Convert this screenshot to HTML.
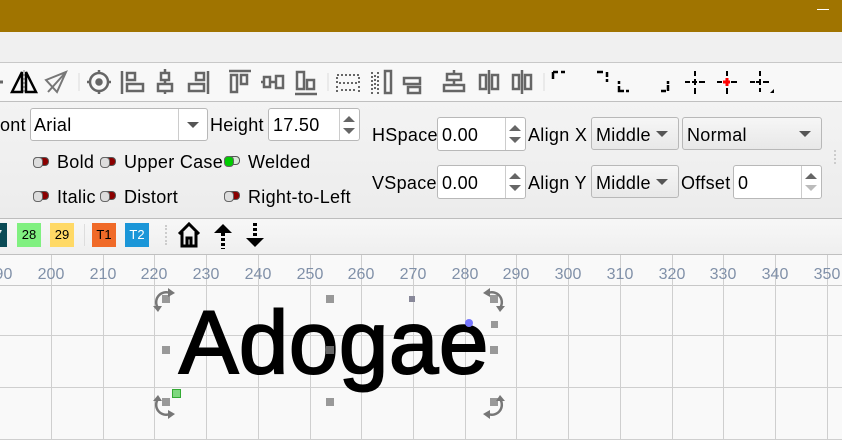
<!DOCTYPE html>
<html><head><meta charset="utf-8"><style>
*{margin:0;padding:0;box-sizing:border-box}
body{width:842px;height:440px;overflow:hidden;position:relative;background:#f0f0f0;font-family:"Liberation Sans",sans-serif;color:#000}
.a{position:absolute}
.t{position:absolute;font-size:18px;white-space:nowrap;line-height:20px;letter-spacing:0.3px}
.box{position:absolute;background:#fff;border:1px solid #b8b8b8;border-radius:3px}
.cb{position:absolute;background:linear-gradient(#f6f6f6,#e8e8e8);border:1px solid #b8b8b8;border-radius:3px}
.arr{position:absolute;width:0;height:0;border-left:6px solid transparent;border-right:6px solid transparent;border-top:6px solid #555}
.tg{position:absolute;width:16px;height:9px;border-radius:4px;background:#8b0000;border:1px solid #555}
.tg:before{content:"";position:absolute;left:-1px;top:-1px;width:8px;height:9px;border-radius:4px;background:#ddd;border:1px solid #666}
.tg.g{background:#d8e8d8}
.tg.g:before{background:#0c0;left:-1px}
.hd{position:absolute;width:8px;height:8px;background:#999}
.rl{position:absolute;font-size:16px;color:#8090a8;top:266px;width:40px;text-align:center}
.vl{position:absolute;top:255px;width:1px;height:185px;background:#cfcfcf}
.hl{position:absolute;left:0;width:842px;height:1px;background:#cfcfcf}
.sw{position:absolute;top:223px;width:24px;height:24px;font-size:13px;text-align:center;line-height:24px}
</style></head><body>
<div class="a" style="left:0;top:0;width:842px;height:32px;background:#a07400"></div>
<div class="a" style="left:817px;top:9px;width:12px;height:1px;background:#fff"></div>
<div class="a" style="left:0;top:32px;width:842px;height:30px;background:#f0f0f0"></div>
<div class="a" style="left:0;top:62px;width:842px;height:1px;background:#c8c8c8"></div>
<div class="a" style="left:0;top:63px;width:842px;height:38px;background:#f8f8f8"></div>
<div class="a" style="left:0;top:101px;width:842px;height:1px;background:#c0c0c0"></div>

<svg class="a" style="left:0;top:63px" width="842" height="38" fill="none" stroke-linecap="butt">
<g stroke="#666" stroke-width="3">
<path d="M0 19h3"/>
</g>
<path d="M12 29l10-20v20z M36 29l-10-20v20z" stroke="#000" stroke-width="2.5"/>
<path d="M24 7v24" stroke="#888" stroke-dasharray="2 2"/>
<path d="M46 17l20-8-9 20zM48 29l18-20" stroke="#777" stroke-width="2"/>
<path d="M79 10v18" stroke="#ddd"/>
<g stroke="#666" stroke-width="2.5">
<circle cx="99" cy="19" r="9"/><circle cx="99" cy="19" r="2.5" fill="#666"/><path d="M99 7v4M99 27v4M87 19h4M107 19h4"/>
<path d="M122 8v23M127 10h8v7h-8zM127 21h16v7h-16z"/>
<path d="M161 10h8v7h-8zM158 21h14v7h-14zM165 17v4M165 6v4M165 28v3"/>
<path d="M208 8v23M196 10h8v7h-8zM189 21h15v7h-15z"/>
<path d="M229 8h22M231 12h6v17h-6zM241 12h6v9h-6z"/>
<path d="M264 14h6v10h-6zM276 13h7v12h-7zM261 19h3M270 19h6"/>
<path d="M295 31h22M297 9h7v17h-7zM307 17h7v9h-7z"/>
</g>
<path d="M328 10v18" stroke="#ddd"/>
<g stroke="#666" stroke-width="2" stroke-dasharray="2 2">
<path d="M337 12h22v8h-22z"/><path d="M337 23v8M359 23v8M341 27h14"/>
<path d="M372 9v22M378 9v22M375 12v16"/>
</g>
<path d="M385 8h6v22h-6z" stroke="#666" stroke-width="2.5"/>
<g stroke="#666" stroke-width="2.5">
<path d="M404 15v6h16v-6zM408 24h12v6h-12z"/>
<path d="M447 11h14v6h-14zM444 22h20v6h-20zM454 7v4M454 17v5"/>
<path d="M480 12h6v14h-6zM492 12h6v14h-6zM489 7v24"/>
<path d="M513 12h6v14h-6zM525 12h6v14h-6zM522 7v24"/>
</g>
<path d="M544 10v18" stroke="#ddd"/>
<g stroke="#000" stroke-width="2.5">
<path d="M553 9v7M553 9h5M561 9h4"/>
<path d="M597 9h6M607 9v5M607 16v3"/>
<path d="M619 18v3M619 23v5h5M626 28h3"/>
<path d="M661 28h5M668 28v-6M668 18v3"/>
</g>
<g stroke="#000" stroke-width="2">
<path d="M685 19h5M692 19h5M699 19h6M695 8v5M695 16v6M695 25v6"/>
<path d="M717 19h5M731 19h6M727 8v5M727 25v6"/>
<path d="M750 19h5M756 19h5M763 19h6M760 8v5M760 16v6M760 25v4"/>
</g>
<path d="M723 19h7M727 15v8" stroke="#f00" stroke-width="3"/>
<path d="M770 30l4-4v4z" fill="#000"/>
</svg>

<!-- font panel -->
<div class="a" style="left:0;top:102px;width:842px;height:116px;background:linear-gradient(#f3f3f3,#ececec)"></div>
<div class="a" style="left:0;top:218px;width:842px;height:1px;background:#bdbdbd"></div>
<div class="t" style="left:0;top:115px">ont</div>
<div class="box" style="left:30px;top:108px;width:178px;height:33px"></div>
<div class="a" style="left:178px;top:109px;width:1px;height:31px;background:#ccc"></div>
<div class="arr" style="left:187px;top:122px"></div>
<div class="t" style="left:34px;top:115px">Arial</div>
<div class="t" style="left:210px;top:115px">Height</div>
<div class="box" style="left:268px;top:108px;width:92px;height:33px"></div>
<div class="a" style="left:339px;top:109px;width:1px;height:31px;background:#ccc"></div>
<div class="t" style="left:273px;top:115px">17.50</div>
<svg class="a" style="left:341px;top:112px" width="16" height="26"><path d="M2 10l6-6 6 6zM2 16l6 6 6-6z" fill="#666"/></svg>

<div class="tg" style="left:33px;top:157px"></div><div class="t" style="left:57px;top:152px">Bold</div>
<div class="tg" style="left:100px;top:157px"></div><div class="t" style="left:124px;top:152px">Upper Case</div>
<div class="tg g" style="left:224px;top:156px"></div><div class="t" style="left:248px;top:152px">Welded</div>
<div class="tg" style="left:33px;top:191px"></div><div class="t" style="left:57px;top:187px">Italic</div>
<div class="tg" style="left:100px;top:191px"></div><div class="t" style="left:124px;top:187px">Distort</div>
<div class="tg" style="left:224px;top:191px"></div><div class="t" style="left:248px;top:187px">Right-to-Left</div>

<div class="t" style="left:372px;top:125px">HSpace</div>
<div class="box" style="left:437px;top:117px;width:89px;height:34px"></div>
<div class="a" style="left:505px;top:118px;width:1px;height:32px;background:#ccc"></div>
<div class="t" style="left:442px;top:125px">0.00</div>
<svg class="a" style="left:507px;top:121px" width="16" height="26"><path d="M2 10l6-6 6 6zM2 16l6 6 6-6z" fill="#666"/></svg>
<div class="t" style="left:528px;top:125px">Align X</div>
<div class="cb" style="left:591px;top:117px;width:88px;height:33px"></div>
<div class="t" style="left:596px;top:125px;width:55px;overflow:hidden">Middle</div>
<div class="arr" style="left:656px;top:131px"></div>
<div class="cb" style="left:682px;top:117px;width:140px;height:33px"></div>
<div class="t" style="left:687px;top:125px">Normal</div>
<div class="arr" style="left:799px;top:131px"></div>

<div class="t" style="left:372px;top:173px">VSpace</div>
<div class="box" style="left:437px;top:165px;width:89px;height:34px"></div>
<div class="a" style="left:505px;top:166px;width:1px;height:32px;background:#ccc"></div>
<div class="t" style="left:442px;top:173px">0.00</div>
<svg class="a" style="left:507px;top:169px" width="16" height="26"><path d="M2 10l6-6 6 6zM2 16l6 6 6-6z" fill="#666"/></svg>
<div class="t" style="left:528px;top:173px">Align Y</div>
<div class="cb" style="left:591px;top:165px;width:88px;height:33px"></div>
<div class="t" style="left:596px;top:173px;width:55px;overflow:hidden">Middle</div>
<div class="arr" style="left:656px;top:179px"></div>
<div class="t" style="left:681px;top:173px">Offset</div>
<div class="box" style="left:733px;top:165px;width:89px;height:34px"></div>
<div class="a" style="left:801px;top:166px;width:1px;height:32px;background:#ccc"></div>
<div class="t" style="left:738px;top:173px">0</div>
<svg class="a" style="left:803px;top:169px" width="16" height="26"><path d="M2 10l6-6 6 6z" fill="#666"/><path d="M2 16l6 6 6-6z" fill="#bbb"/></svg>
<div class="a" style="left:834px;top:150px;width:2px;height:14px;border-left:2px dotted #ccc"></div>

<!-- toolbar 2 -->
<div class="a" style="left:0;top:219px;width:842px;height:35px;background:linear-gradient(#f7f7f7,#efefef)"></div>
<div class="a" style="left:0;top:254px;width:842px;height:1px;background:#c0c0c0"></div>
<div class="sw" style="left:-17px;background:#0a4a55;color:#fff">27</div>
<div class="sw" style="left:17px;background:#80f080">28</div>
<div class="sw" style="left:50px;background:#ffd966">29</div>
<div class="a" style="left:84px;top:224px;width:1px;height:22px;background:#ddd"></div>
<div class="sw" style="left:92px;background:#f06a28">T1</div>
<div class="sw" style="left:125px;background:#1b96d8;color:#fff">T2</div>
<div class="a" style="left:165px;top:225px;width:2px;height:20px;border-left:2px dotted #ccc"></div>
<svg class="a" style="left:176px;top:221px" width="100" height="30">
<path d="M3 13L13 3l10 10M6 11v14h14V11M11 25v-8h4v8" stroke="#000" stroke-width="3" fill="none"/>
<path d="M38 12l9-9 9 9z" fill="#000"/><path d="M47 12v16" stroke="#000" stroke-width="4" stroke-dasharray="3 2"/>
<path d="M70 17l9 9 9-9z" fill="#000"/><path d="M79 2v16" stroke="#000" stroke-width="4" stroke-dasharray="3 2"/>
</svg>

<!-- ruler & canvas -->
<div class="a" style="left:0;top:255px;width:842px;height:185px;background:#f9f9f9"></div>
<div class="a" style="left:0;top:285px;width:842px;height:1px;background:#c8c8c8"></div>
<div class="hl" style="top:335px"></div>
<div class="hl" style="top:387px"></div>
<div class="hl" style="top:439px"></div>
<div class="vl" style="left:-1px"></div>
<div class="vl" style="left:51px"></div><div class="vl" style="left:103px"></div><div class="vl" style="left:154px"></div>
<div class="vl" style="left:206px"></div><div class="vl" style="left:258px"></div><div class="vl" style="left:310px"></div>
<div class="vl" style="left:361px"></div><div class="vl" style="left:413px"></div><div class="vl" style="left:465px"></div>
<div class="vl" style="left:516px"></div><div class="vl" style="left:568px"></div><div class="vl" style="left:620px"></div>
<div class="vl" style="left:672px"></div><div class="vl" style="left:723px"></div><div class="vl" style="left:775px"></div>
<div class="vl" style="left:827px"></div>
<div class="rl" style="left:-21px">190</div>
<div class="rl" style="left:31px">200</div><div class="rl" style="left:83px">210</div><div class="rl" style="left:134px">220</div>
<div class="rl" style="left:186px">230</div><div class="rl" style="left:238px">240</div><div class="rl" style="left:290px">250</div>
<div class="rl" style="left:341px">260</div><div class="rl" style="left:393px">270</div><div class="rl" style="left:445px">280</div>
<div class="rl" style="left:496px">290</div><div class="rl" style="left:548px">300</div><div class="rl" style="left:600px">310</div>
<div class="rl" style="left:652px">320</div><div class="rl" style="left:703px">330</div><div class="rl" style="left:755px">340</div>
<div class="rl" style="left:807px">350</div>

<div class="a" style="left:179px;top:292px;font-size:89px;line-height:100px;font-family:'Liberation Sans',Arial,sans-serif;-webkit-text-stroke:2px #000;letter-spacing:0.5px">Adogae</div>

<div class="hd" style="left:326px;top:295px"></div>
<div class="hd" style="left:409px;top:296px;width:6px;height:6px;background:#889"></div>
<div class="hd" style="left:162px;top:346px"></div>
<div class="hd" style="left:326px;top:346px;background:#666"></div>
<div class="hd" style="left:490px;top:346px"></div>
<div class="hd" style="left:491px;top:321px;width:7px;height:7px"></div>
<div class="hd" style="left:326px;top:398px"></div>
<div class="hd" style="left:162px;top:295px"></div>
<div class="hd" style="left:490px;top:295px"></div>
<div class="hd" style="left:162px;top:398px"></div>
<div class="hd" style="left:490px;top:398px"></div>
<div class="a" style="left:172px;top:389px;width:9px;height:9px;background:#7ed87e;border:1px solid #3a3"></div>
<div class="a" style="left:465px;top:319px;width:8px;height:8px;border-radius:50%;background:#77f"></div>
<svg class="a" style="left:150px;top:284px" width="360" height="140" fill="none" stroke="#777" stroke-width="2.5">
<path d="M20 9a10 10 0 0 0-12 15"/><path d="M18 4l7 5-7 4z" fill="#777" stroke="none"/><path d="M3 22l5 6 4-6z" fill="#777" stroke="none"/>
<path d="M338 9a10 10 0 0 1 12 15"/><path d="M340 4l-7 5 7 4z" fill="#777" stroke="none"/><path d="M355 22l-5 6-4-6z" fill="#777" stroke="none"/>
<path d="M8 115a10 10 0 0 0 12 15"/><path d="M3 117l5-6 4 6z" fill="#777" stroke="none"/><path d="M18 135l7-5-7-4z" fill="#777" stroke="none"/>
<path d="M350 115a10 10 0 0 1-12 15"/><path d="M355 117l-5-6-4 6z" fill="#777" stroke="none"/><path d="M340 135l-7-5 7-4z" fill="#777" stroke="none"/>
</svg>
</body></html>
